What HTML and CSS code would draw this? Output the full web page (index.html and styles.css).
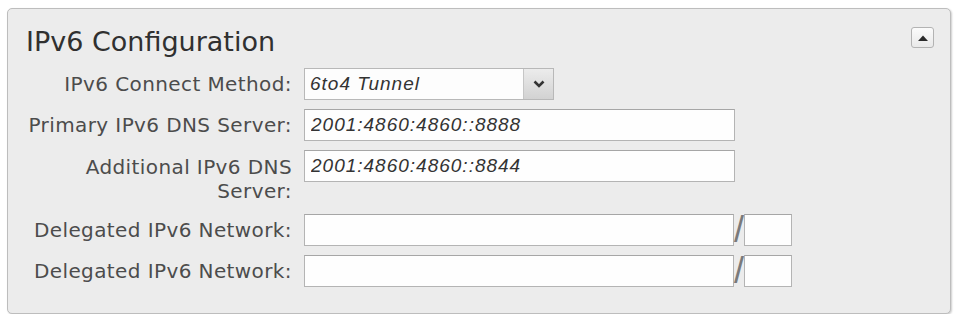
FILE: index.html
```html
<!DOCTYPE html>
<html>
<head>
<meta charset="utf-8">
<link rel="stylesheet" href="styles.css">
</head>
<body>
<div class="panel">
  <div class="panel-head">
    <h2 class="title">IPv6 Configuration</h2>
    <div class="collapse"><svg width="10" height="6" viewBox="0 0 10 6"><path d="M0 6 L5 0.5 L10 6 Z" fill="#2a2a2a"/></svg></div>
  </div>
  <div class="form">
    <label class="lbl">IPv6 Connect Method:</label>
    <div class="field">
      <div class="select">
        <span class="select-text">6to4 Tunnel</span>
        <span class="select-btn"><svg width="12" height="8" viewBox="0 0 12 8"><path d="M1.5 1.5 L6 6 L10.5 1.5" fill="none" stroke="#333" stroke-width="2.6"/></svg></span>
      </div>
    </div>

    <label class="lbl">Primary IPv6 DNS Server:</label>
    <div class="field"><input class="txt wide" type="text" value="2001:4860:4860::8888"></div>

    <label class="lbl two">Additional IPv6 DNS<br>Server:</label>
    <div class="field"><input class="txt wide" type="text" value="2001:4860:4860::8844"></div>

    <label class="lbl">Delegated IPv6 Network:</label>
    <div class="field"><input class="txt net" type="text" value=""><span class="slash">/</span><input class="txt prefix" type="text" value=""></div>

    <label class="lbl">Delegated IPv6 Network:</label>
    <div class="field"><input class="txt net" type="text" value=""><span class="slash">/</span><input class="txt prefix" type="text" value=""></div>
  </div>
</div>
</body>
</html>
```
FILE: styles.css
```css
html, body {
  margin: 0;
  background: #ffffff;
}
body {
  padding: 8px 0 0 7px;
  font-family: "DejaVu Sans", Verdana, sans-serif;
}
.panel {
  box-sizing: border-box;
  width: 944px;
  height: 306px;
  background: #ececec;
  border: 1px solid #bdbdbd;
  border-radius: 5px;
  box-shadow: 1px 1px 2px rgba(0,0,0,0.2);
  padding: 17px 15px 0 18px;
}
.panel-head {
  display: flex;
  justify-content: space-between;
  align-items: flex-start;
}
.title {
  margin: 0;
  font-weight: normal;
  font-size: 27px;
  line-height: 32px;
  color: #303030;
}
.collapse {
  box-sizing: border-box;
  width: 23px;
  height: 21px;
  margin-top: 1px;
  margin-right: 1px;
  border: 1px solid #b3b3b3;
  border-radius: 3px;
  background: linear-gradient(#fbfbfb, #e9e9e9);
  display: flex;
  align-items: center;
  justify-content: center;
}
.form {
  margin-top: 10px;
  display: grid;
  grid-template-columns: 266px auto;
  column-gap: 12px;
  row-gap: 9px;
}
.lbl {
  text-align: right;
  font-size: 20px;
  letter-spacing: 0.4px;
  line-height: 22px;
  color: #4c4c4c;
  padding: 5px 0;
}
.lbl.two {
  line-height: 24px;
  padding: 5px 0 2px;
}
.field {
  display: flex;
  align-items: flex-start;
}
.select {
  box-sizing: border-box;
  width: 250px;
  height: 32px;
  background: #fdfdfd;
  border: 1px solid #b8b8b8;
  display: flex;
}
.select-text {
  flex: 1;
  font-family: "Liberation Sans", Arial, sans-serif;
  font-style: italic;
  font-size: 19px;
  letter-spacing: 1px;
  color: #333;
  line-height: 30px;
  padding-left: 5px;
}
.select-btn {
  width: 29px;
  border-left: 1px solid #c6c6c6;
  background: linear-gradient(#ececec, #d2d2d2);
  display: flex;
  align-items: center;
  justify-content: center;
}
.txt {
  box-sizing: border-box;
  height: 32px;
  margin: 0;
  background: #fefefe;
  border: 1px solid #b4b4b4;
  border-top-color: #a6a6a6;
  border-radius: 0;
  padding: 0 0 0 6px;
  font-family: "Liberation Sans", Arial, sans-serif;
  font-style: italic;
  font-size: 19px;
  letter-spacing: 1px;
  color: #333;
  outline: none;
}
.wide {
  width: 431px;
}
.net {
  width: 430px;
}
.prefix {
  width: 48px;
}
.slash {
  width: 10px;
  font-family: "Liberation Sans", Arial, sans-serif;
  font-size: 36px;
  line-height: 32px;
  color: #7a7a7a;
  text-align: center;
}
```
